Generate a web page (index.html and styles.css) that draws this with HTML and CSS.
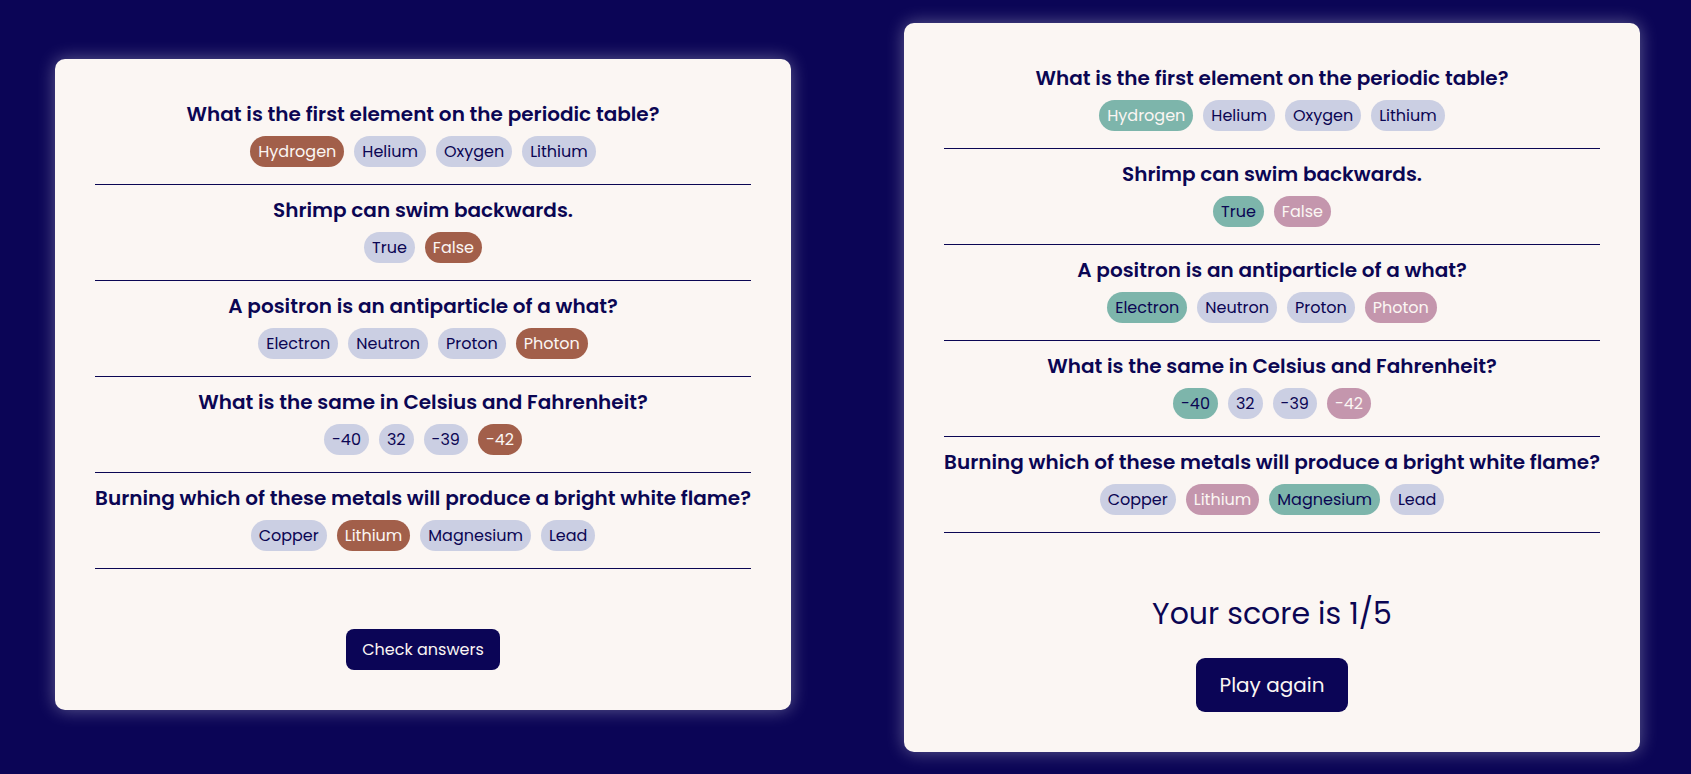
FILE: index.html
```html
<!DOCTYPE html>
<html lang="en">
<head>
<meta charset="utf-8">
<title>Quizzical</title>
<link rel="stylesheet" href="styles.css">
</head>
<body>
<main class="page">
  <section class="card card-quiz">
    <div class="question">
      <h2 class="q-title">What is the first element on the periodic table?</h2>
      <div class="answers">
        <span class="pill selected">Hydrogen</span><span class="pill">Helium</span><span class="pill">Oxygen</span><span class="pill">Lithium</span>
      </div>
    </div>
    <div class="question">
      <h2 class="q-title">Shrimp can swim backwards.</h2>
      <div class="answers">
        <span class="pill">True</span><span class="pill selected">False</span>
      </div>
    </div>
    <div class="question">
      <h2 class="q-title">A positron is an antiparticle of a what?</h2>
      <div class="answers">
        <span class="pill">Electron</span><span class="pill">Neutron</span><span class="pill">Proton</span><span class="pill selected">Photon</span>
      </div>
    </div>
    <div class="question">
      <h2 class="q-title">What is the same in Celsius and Fahrenheit?</h2>
      <div class="answers">
        <span class="pill">-40</span><span class="pill">32</span><span class="pill">-39</span><span class="pill selected">-42</span>
      </div>
    </div>
    <div class="question">
      <h2 class="q-title">Burning which of these metals will produce a bright white flame?</h2>
      <div class="answers">
        <span class="pill">Copper</span><span class="pill selected">Lithium</span><span class="pill">Magnesium</span><span class="pill">Lead</span>
      </div>
    </div>
    <div class="footer footer-check">
      <button class="btn btn-check">Check answers</button>
    </div>
  </section>

  <section class="card card-result">
    <div class="question">
      <h2 class="q-title">What is the first element on the periodic table?</h2>
      <div class="answers">
        <span class="pill correct picked">Hydrogen</span><span class="pill">Helium</span><span class="pill">Oxygen</span><span class="pill">Lithium</span>
      </div>
    </div>
    <div class="question">
      <h2 class="q-title">Shrimp can swim backwards.</h2>
      <div class="answers">
        <span class="pill correct">True</span><span class="pill wrong">False</span>
      </div>
    </div>
    <div class="question">
      <h2 class="q-title">A positron is an antiparticle of a what?</h2>
      <div class="answers">
        <span class="pill correct">Electron</span><span class="pill">Neutron</span><span class="pill">Proton</span><span class="pill wrong">Photon</span>
      </div>
    </div>
    <div class="question">
      <h2 class="q-title">What is the same in Celsius and Fahrenheit?</h2>
      <div class="answers">
        <span class="pill correct">-40</span><span class="pill">32</span><span class="pill">-39</span><span class="pill wrong">-42</span>
      </div>
    </div>
    <div class="question">
      <h2 class="q-title">Burning which of these metals will produce a bright white flame?</h2>
      <div class="answers">
        <span class="pill">Copper</span><span class="pill wrong">Lithium</span><span class="pill correct">Magnesium</span><span class="pill">Lead</span>
      </div>
    </div>
    <div class="footer footer-result">
      <p class="score">Your score is 1/5</p>
      <button class="btn btn-play">Play again</button>
    </div>
  </section>
</main>
</body>
</html>
```
FILE: styles.css
```css
* { box-sizing: border-box; }

body {
  margin: 0;
  background: #0b0556;
  color: #0b0653;
  font-family: Poppins, Inter, "Open Sans", sans-serif;
}

.page {
  height: 100vh;
  display: flex;
  align-items: center;
  padding-left: 55px;
  gap: 113px;
  overflow: hidden;
}

.card {
  width: 736px;
  flex: none;
  padding: 30px 40px 40px;
  background: #fbf6f3;
  border-radius: 10px;
  box-shadow: 0 0 18px rgba(255, 255, 255, 0.35);
}

.card-quiz { margin-bottom: 5px; }

.question {
  padding: 14px 0 17px;
  border-bottom: 1px solid #0b0653;
  text-align: center;
}

.q-title {
  margin: 0;
  font-size: 20px;
  line-height: 22px;
  font-weight: 600;
  white-space: nowrap;
}

.answers {
  margin-top: 11px;
  display: flex;
  justify-content: center;
  gap: 10px;
}

.pill {
  height: 31px;
  line-height: 31px;
  padding: 0 8px;
  border-radius: 15.5px;
  background: #cbcfe3;
  font-size: 16px;
}

.pill.selected { background: #a25f4a; color: #fbf6f3; }
.pill.correct { background: #7db5ab; }
.pill.correct.picked { color: #fbf6f3; }
.pill.wrong { background: #c496ad; color: #fbf6f3; }

.footer {
  display: flex;
  flex-direction: column;
  align-items: center;
}

.footer-check { margin-top: 60px; }
.footer-result { margin-top: 65px; }

.score {
  margin: 0 0 28px;
  font-size: 30px;
  line-height: 32px;
}

.btn {
  border: none;
  background: #0b0556;
  color: #fbf6f3;
  font-family: inherit;
  border-radius: 8px;
  padding: 0;
}

.btn-check {
  width: 154px;
  height: 41px;
  font-size: 16px;
}

.btn-play {
  width: 152px;
  height: 54px;
  font-size: 20px;
  border-radius: 9px;
}
```
